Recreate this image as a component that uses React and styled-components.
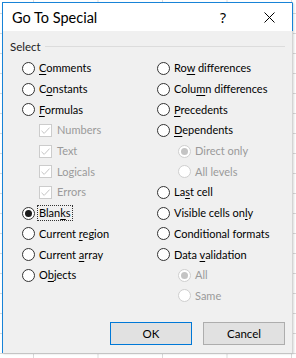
import React from "react";
import styled, { createGlobalStyle } from "styled-components";

const Global = createGlobalStyle`
  html, body { margin: 0; padding: 0; }
  body {
    width: 296px; height: 358px; overflow: hidden;
    background-color: #ffffff;
    background-image:
      linear-gradient(to right, #dadada 1px, transparent 1px),
      linear-gradient(to bottom, #dadada 1px, transparent 1px);
    background-size: 64.5px 20px, 64.5px 20px;
    background-position: 33px 0, 0 13px;
    font-family: Lato, "Noto Sans", sans-serif;
  }
`;

const Dialog = styled.div`
  margin: 2px 0 0 2px;
  width: 291px;
  height: 351px;
  box-sizing: border-box;
  background: #f0f0f0;
  border-left: 1px solid #1883d7;
  border-top: 1px solid #1883d7;
  border-right: 1px solid #d4d4d4;
  box-shadow: 1px 1px 2px rgba(0,0,0,0.15);
  display: flex;
  flex-direction: column;
`;

const TitleBar = styled.div`
  height: 28px;
  background: #ffffff;
  display: flex;
  align-items: center;
  margin-right: -1px;
  border-right: 1px solid #1883d7;
`;

const Title = styled.div`
  flex: 1;
  padding-left: 9px;
  font-size: 14.5px;
  color: #000;
`;

const TitleBtn = styled.div`
  width: ${p => p.$w}px;
  height: 28px;
  display: flex;
  align-items: center;
  justify-content: center;
  font-size: 14px;
  color: #000;
  font-family: "Noto Sans", sans-serif;
`;

const Body = styled.div`
  flex: 1;
  display: flex;
  flex-direction: column;
  padding: 8px 7px 8px 7px;
`;

const Legend = styled.div`
  display: flex;
  align-items: center;
  height: 14px;
  font-size: 11.5px;
  color: #222;
  &::after {
    content: "";
    flex: 1;
    height: 1px;
    background: #dcdcdc;
    margin-left: 4px;
  }
`;

const Columns = styled.div`
  display: grid;
  grid-template-columns: 135px 1fr;
  margin-top: 5px;
  padding-left: 12px;
`;

const Col = styled.div`
  display: flex;
  flex-direction: column;
`;

const Row = styled.div`
  height: 20.7px;
  display: flex;
  align-items: center;
  padding-left: ${p => p.$indent || 0}px;
  font-size: 11px;
  color: ${p => (p.$disabled ? "#9a9a9a" : "#000")};
  white-space: nowrap;
`;

const Circle = styled.span`
  width: 13px;
  height: 13px;
  box-sizing: border-box;
  border-radius: 50%;
  border: 1px solid ${p => (p.$disabled ? "#cfcfcf" : "#333")};
  background: #fff;
  display: flex;
  align-items: center;
  justify-content: center;
  margin-right: 4px;
  flex: none;
  &::after {
    content: "";
    display: ${p => (p.$checked ? "block" : "none")};
    width: 7px;
    height: 7px;
    border-radius: 50%;
    background: ${p => (p.$disabled ? "#c4c4c4" : "#1a1a1a")};
  }
`;

const Box = styled.span`
  width: 13px;
  height: 13px;
  box-sizing: border-box;
  border: 1px solid #cccccc;
  background: #fff;
  display: flex;
  align-items: center;
  justify-content: center;
  margin-right: 5px;
  flex: none;
`;

const Label = styled.span`
  padding: 0 1px;
  line-height: 14px;
  border: 1px ${p => (p.$focus ? "dotted #333" : "solid transparent")};
  margin-left: -2px;
`;

const U = styled.span`
  text-decoration: underline;
  text-underline-offset: 1.5px;
`;

const Buttons = styled.div`
  margin-top: auto;
  display: flex;
  justify-content: flex-end;
  gap: 11px;
`;

const Button = styled.button`
  width: 82px;
  height: 23px;
  box-sizing: border-box;
  background: #e1e1e1;
  border: 1px solid ${p => (p.$primary ? "#0078d7" : "#adadad")};
  font-family: inherit;
  font-size: 11.5px;
  color: #000;
  padding: 0;
`;

function Lbl({ text, u, focus }) {
  if (u == null) return <Label $focus={focus}>{text}</Label>;
  return (
    <Label $focus={focus}>
      {text.slice(0, u)}
      <U>{text[u]}</U>
      {text.slice(u + 1)}
    </Label>
  );
}

function Radio({ text, u, checked, disabled, indent, focus }) {
  return (
    <Row $disabled={disabled} $indent={indent}>
      <Circle $checked={checked} $disabled={disabled} />
      <Lbl text={text} u={u} focus={focus} />
    </Row>
  );
}

function Check({ text }) {
  return (
    <Row $disabled $indent={17}>
      <Box>
        <svg width="11" height="11" viewBox="0 0 11 11">
          <path d="M1.5 5.8 L4.2 8.4 L9.6 2.6" fill="none" stroke="#c4c4c4" strokeWidth="1" />
        </svg>
      </Box>
      <Lbl text={text} />
    </Row>
  );
}

export default function App() {
  return (
    <>
      <Global />
      <Dialog>
        <TitleBar>
          <Title>Go To Special</Title>
          <TitleBtn $w={46}>?</TitleBtn>
          <TitleBtn $w={46}>
            <svg width="11" height="11" viewBox="0 0 11 11">
              <path d="M0.5 0.5 L10.5 10.5 M10.5 0.5 L0.5 10.5" stroke="#000" strokeWidth="1" />
            </svg>
          </TitleBtn>
        </TitleBar>
        <Body>
          <Legend>Select</Legend>
          <Columns>
            <Col>
              <Radio text="Comments" u={0} />
              <Radio text="Constants" u={1} />
              <Radio text="Formulas" u={0} />
              <Check text="Numbers" />
              <Check text="Text" />
              <Check text="Logicals" />
              <Check text="Errors" />
              <Radio text="Blanks" u={4} checked focus />
              <Radio text="Current region" u={8} />
              <Radio text="Current array" u={8} />
              <Radio text="Objects" u={1} />
            </Col>
            <Col>
              <Radio text="Row differences" u={2} />
              <Radio text="Column differences" u={4} />
              <Radio text="Precedents" u={0} />
              <Radio text="Dependents" u={0} />
              <Radio text="Direct only" checked disabled indent={21} />
              <Radio text="All levels" disabled indent={21} />
              <Radio text="Last cell" u={2} />
              <Radio text="Visible cells only" u={16} />
              <Radio text="Conditional formats" u={6} />
              <Radio text="Data validation" u={5} />
              <Radio text="All" checked disabled indent={21} />
              <Radio text="Same" disabled indent={21} />
            </Col>
          </Columns>
          <Buttons>
            <Button $primary>OK</Button>
            <Button>Cancel</Button>
          </Buttons>
        </Body>
      </Dialog>
    </>
  );
}
